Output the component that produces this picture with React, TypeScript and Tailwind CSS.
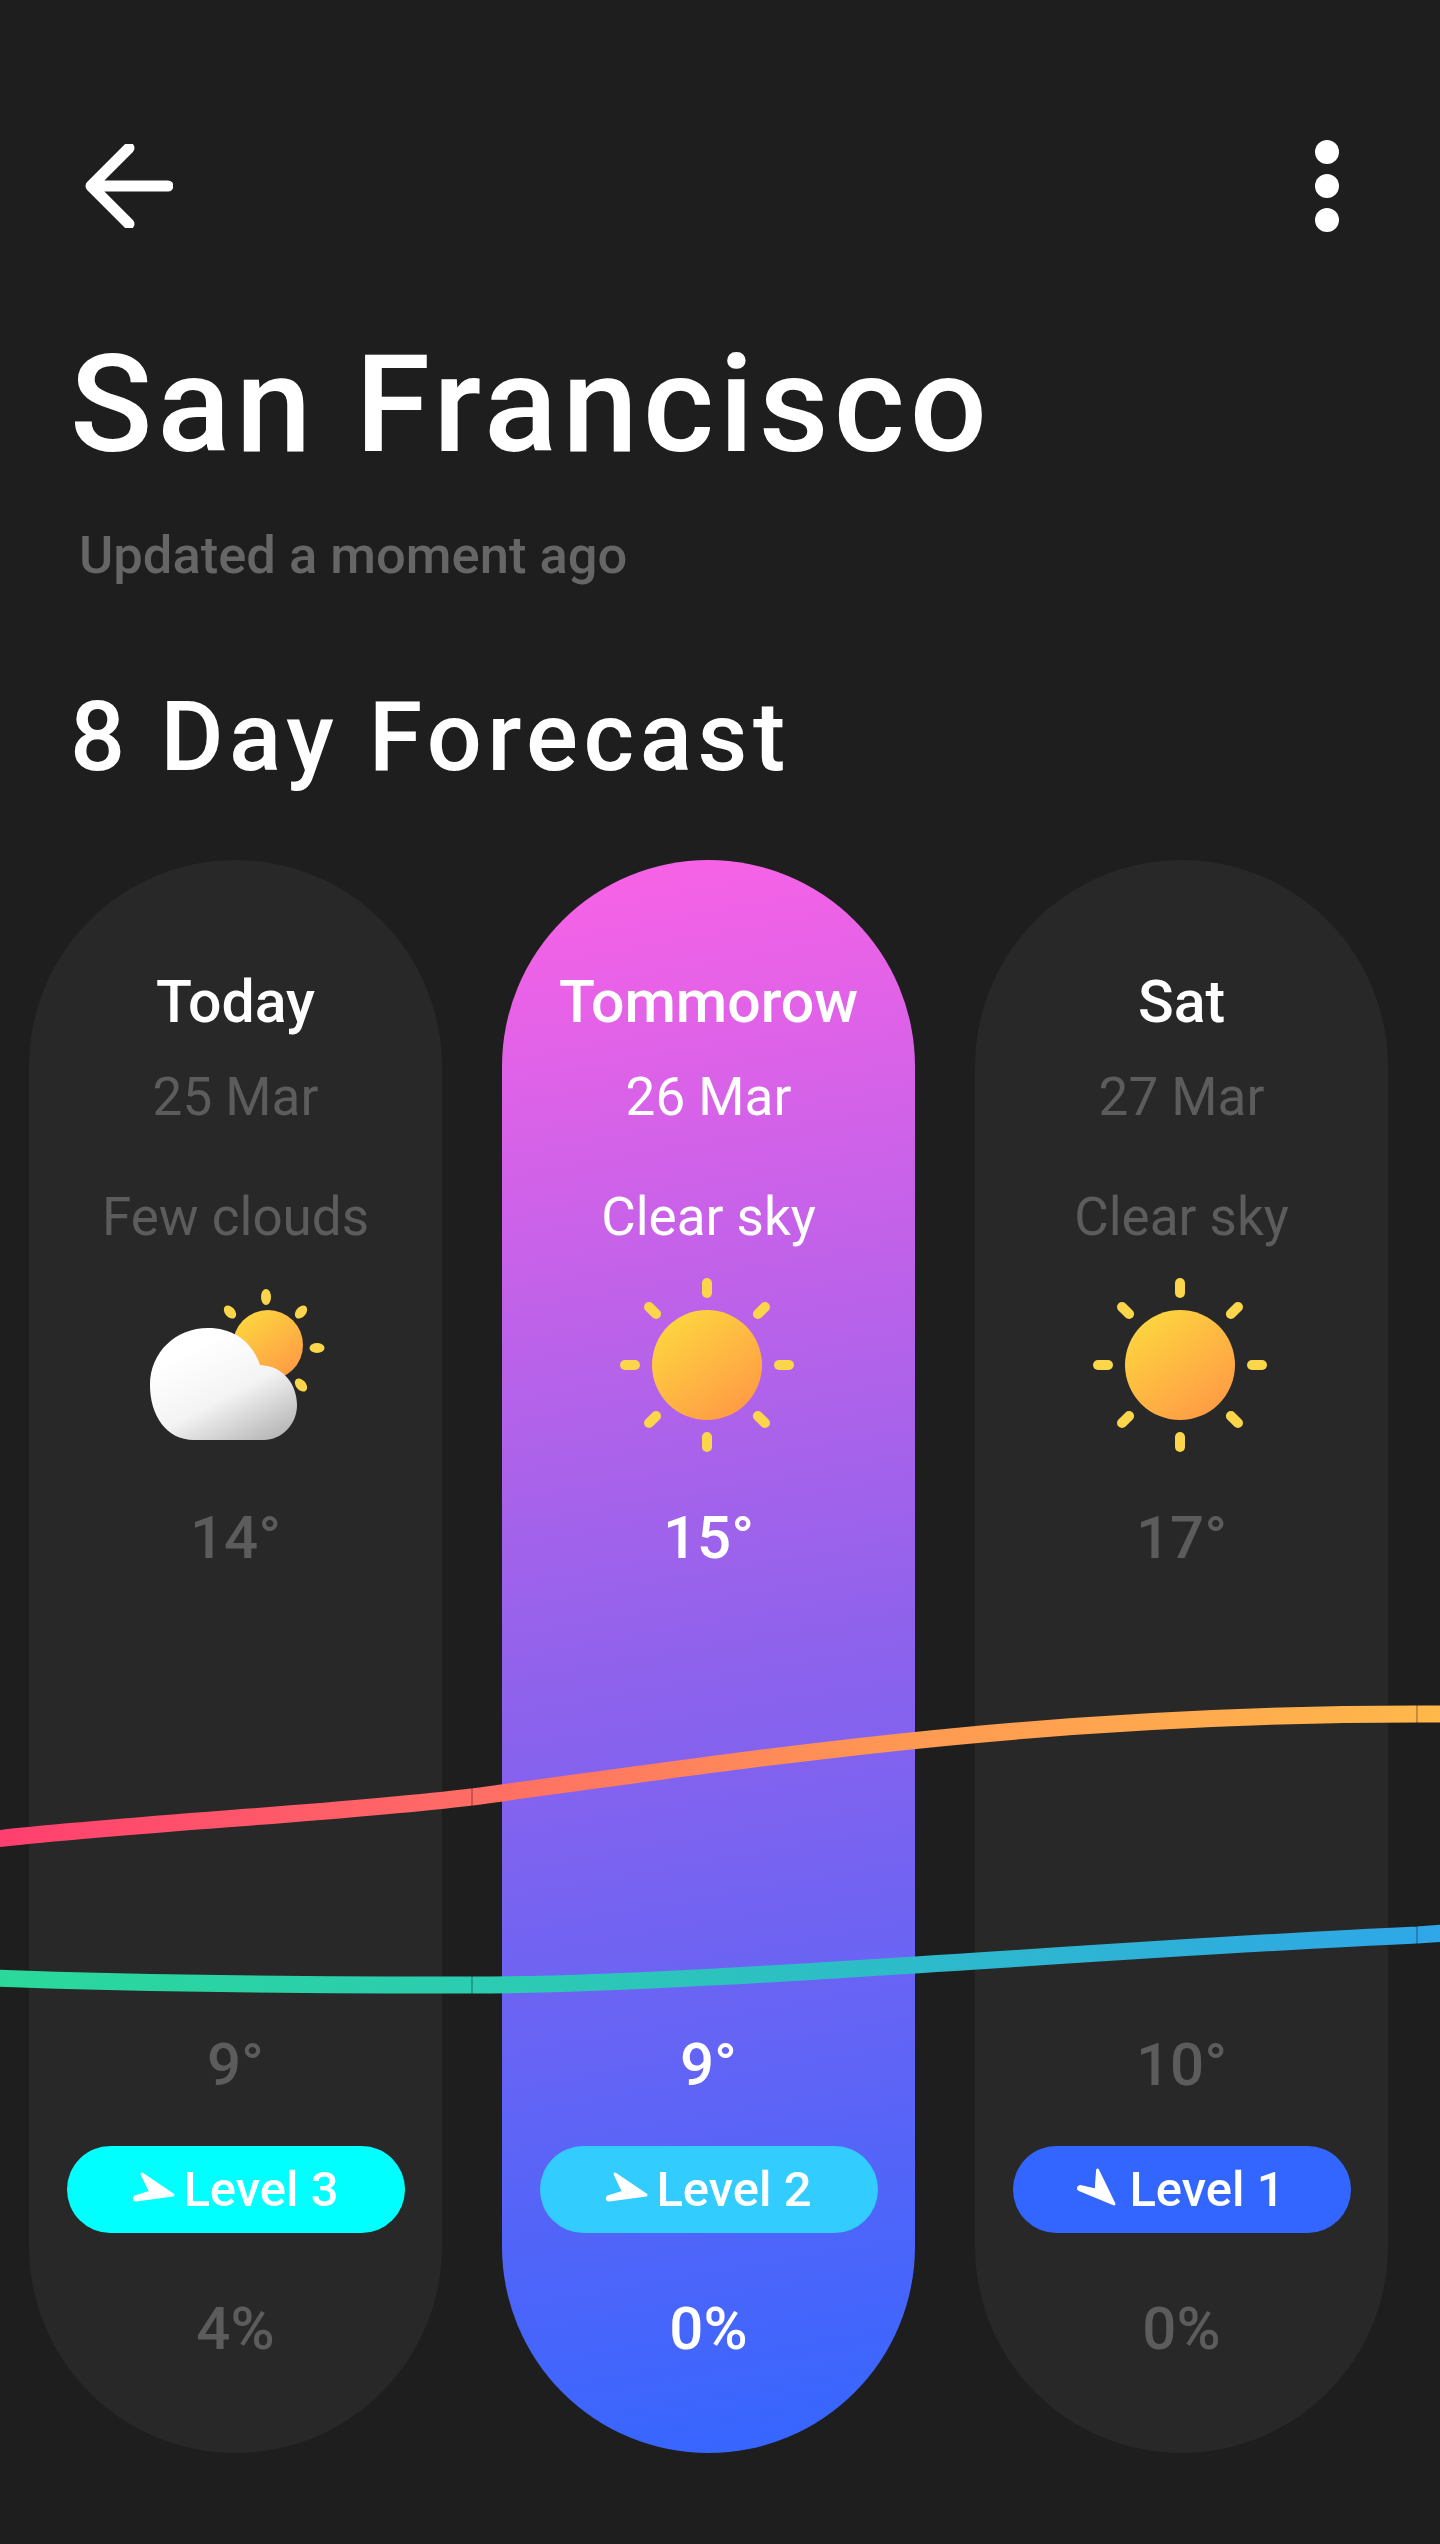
const font = { fontFamily: "Roboto, sans-serif" };

const rayAngles = [0, 45, 90, 135, 180, 225, 270, 315];

function SunIcon({ id }: { id: string }) {
  return (
    <svg width="180" height="180" viewBox="0 0 180 180">
      <defs>
        <linearGradient id={id} x1="0.2" y1="0.1" x2="0.8" y2="0.9">
          <stop offset="0" stopColor="#fdd33f" />
          <stop offset="1" stopColor="#ff9d45" />
        </linearGradient>
      </defs>
      {rayAngles.map((a) => (
        <rect key={a} x="83" y="3" width="10" height="20" rx="5" fill="#fbd54a" transform={`rotate(${a} 88 90)`} />
      ))}
      <circle cx="88" cy="90" r="55" fill={`url(#${id})`} />
    </svg>
  );
}

function CloudIcon() {
  return (
    <svg width="180" height="180" viewBox="0 0 180 180">
      <defs>
        <linearGradient id="cloudSun" x1="0.2" y1="0.1" x2="0.8" y2="0.9">
          <stop offset="0" stopColor="#fdd33f" />
          <stop offset="1" stopColor="#ff9d45" />
        </linearGradient>
        <linearGradient id="cloudBody" x1="0.25" y1="0.2" x2="0.8" y2="1">
          <stop offset="0" stopColor="#ffffff" />
          <stop offset="0.5" stopColor="#f4f4f4" />
          <stop offset="1" stopColor="#b9b9b9" />
        </linearGradient>
      </defs>
      <ellipse cx="120" cy="22" rx="5" ry="8" fill="#fbd54a" />
      <ellipse cx="84" cy="37" rx="5" ry="7.5" fill="#fbd54a" transform="rotate(-40 84 37)" />
      <ellipse cx="155" cy="37" rx="5" ry="7.5" fill="#fbd54a" transform="rotate(40 155 37)" />
      <ellipse cx="171" cy="73" rx="7.5" ry="5" fill="#fbd54a" />
      <ellipse cx="155" cy="110" rx="5" ry="7.5" fill="#fbd54a" transform="rotate(-40 155 110)" />
      <circle cx="122" cy="70" r="35" fill="url(#cloudSun)" />
      <path
        d="M48 165 C20 165 4 140 4 110 C4 77 30 53 62 53 C88 53 106 67 114 90 C138 91 151 110 151 130 C151 150 135 165 118 165 Z"
        fill="url(#cloudBody)"
      />
    </svg>
  );
}

function WindArrow({ rotate }: { rotate: number }) {
  return (
    <svg width="44" height="44" viewBox="0 0 44 44" style={{ transform: `rotate(${rotate}deg)` }}>
      <path
        d="M41 27 L10 6 C14 14 16 19 19 24 L3 29 C2 31 2 32 4 32 Z"
        fill="#fff"
        stroke="#fff"
        strokeWidth="3"
        strokeLinejoin="round"
      />
    </svg>
  );
}

function Row({ className, children }: { className: string; children: React.ReactNode }) {
  return <div className={`h-[80px] flex items-center justify-center ${className}`}>{children}</div>;
}

const days = [
  { day: "Today", date: "25 Mar", sky: "Few clouds", icon: "cloud", hi: "14°", lo: "9°", level: "Level 3", pill: "bg-[#00ffff]", rot: 0, rain: "4%" },
  { day: "Tommorow", date: "26 Mar", sky: "Clear sky", icon: "sunA", hi: "15°", lo: "9°", level: "Level 2", pill: "bg-[#33ccff]", rot: 0, rain: "0%", active: true },
  { day: "Sat", date: "27 Mar", sky: "Clear sky", icon: "sunB", hi: "17°", lo: "10°", level: "Level 1", pill: "bg-[#3366ff]", rot: 30, rain: "0%" },
];

function DayColumn({ d }: { d: (typeof days)[number] }) {
  const muted = d.active ? "text-white" : "text-[#5c5c5c]";
  return (
    <div
      className={`w-[413px] h-[1593px] rounded-[207px] pt-[102px] flex flex-col ${
        d.active ? "bg-[linear-gradient(170deg,#fb62e6_0%,#8f62ec_50%,#3366ff_100%)]" : "bg-[#282828]"
      }`}
    >
      <Row className="text-[59px] font-medium text-white">{d.day}</Row>
      <Row className={`mt-[16px] text-[53px] ${muted}`}>{d.date}</Row>
      <Row className={`mt-[40px] text-[53px] ${muted}`}>{d.sky}</Row>
      <div className="mt-[17px] h-[180px] flex justify-center">
        {d.icon === "cloud" ? <CloudIcon /> : <SunIcon id={d.icon} />}
      </div>
      <Row className={`mt-[43px] text-[60px] font-medium ${muted}`}>{d.hi}</Row>
      <Row className={`mt-[447px] text-[60px] font-medium ${muted}`}>{d.lo}</Row>
      <div className={`mt-[41px] mx-auto w-[338px] h-[87px] rounded-full flex items-center justify-center gap-[7px] text-white text-[49px] font-medium ${d.pill}`}>
        <WindArrow rotate={d.rot} />
        <span>{d.level}</span>
      </div>
      <Row className={`mt-[56px] text-[60px] font-medium ${muted}`}>{d.rain}</Row>
    </div>
  );
}

function TempChart() {
  return (
    <svg className="absolute left-0 top-[1680px] pointer-events-none" width="1440" height="340" viewBox="0 0 1440 340">
      <defs>
        <linearGradient id="hot" gradientUnits="userSpaceOnUse" x1="0" y1="0" x2="1440" y2="0">
          <stop offset="0" stopColor="#ff3f6f" />
          <stop offset="0.33" stopColor="#ff6d65" />
          <stop offset="0.64" stopColor="#ff9a52" />
          <stop offset="1" stopColor="#ffb84a" />
        </linearGradient>
        <linearGradient id="cold" gradientUnits="userSpaceOnUse" x1="0" y1="0" x2="1440" y2="0">
          <stop offset="0" stopColor="#2ad99a" />
          <stop offset="0.33" stopColor="#2bccb0" />
          <stop offset="0.64" stopColor="#2dbacb" />
          <stop offset="1" stopColor="#2fa6e8" />
        </linearGradient>
      </defs>
      <path d="M-5 159 C150 142 330 134 472 117 C760 78 1040 34 1417 34 L1445 34" fill="none" stroke="url(#hot)" strokeWidth="17" />
      <path d="M-5 298 C150 304 320 305 472 305 C700 305 1100 269 1417 255 L1445 253" fill="none" stroke="url(#cold)" strokeWidth="17" />
      <path d="M472 108 V126 M472 296 V314 M1417 25 V43 M1417 246 V264" stroke="#000" strokeOpacity="0.45" strokeWidth="1" />
    </svg>
  );
}

export default function App() {
  return (
    <div className="relative w-[1440px] h-[2544px] overflow-hidden bg-[#1e1e1e] text-white" style={font}>
      <div className="h-[144px]" />
      <div className="flex justify-between items-center h-[84px] pl-[85px] pr-[101px]">
        <svg width="88" height="84" viewBox="0 0 88 84" fill="none" stroke="#fff" strokeWidth="11" strokeLinecap="round" strokeLinejoin="round">
          <path d="M83 42 H6 M44 4 L6 42 L44 80" />
        </svg>
        <div className="flex flex-col gap-[10px]">
          <div className="w-[24px] h-[24px] rounded-full bg-white" />
          <div className="w-[24px] h-[24px] rounded-full bg-white" />
          <div className="w-[24px] h-[24px] rounded-full bg-white" />
        </div>
      </div>
      <h1 className="mt-[107px] ml-[70px] h-[140px] leading-[140px] text-[136px] font-medium tracking-[5px]">San Francisco</h1>
      <p className="mt-[50px] ml-[79px] h-[60px] leading-[60px] text-[52.5px] font-medium text-[#666666]">Updated a moment ago</p>
      <h2 className="mt-[97px] ml-[70px] h-[110px] leading-[110px] text-[97px] font-medium tracking-[5.5px]">8 Day Forecast</h2>
      <div className="absolute top-[860px] left-[29px] flex gap-[60px]">
        {days.map((d) => (
          <DayColumn key={d.day} d={d} />
        ))}
      </div>
      <TempChart />
    </div>
  );
}
